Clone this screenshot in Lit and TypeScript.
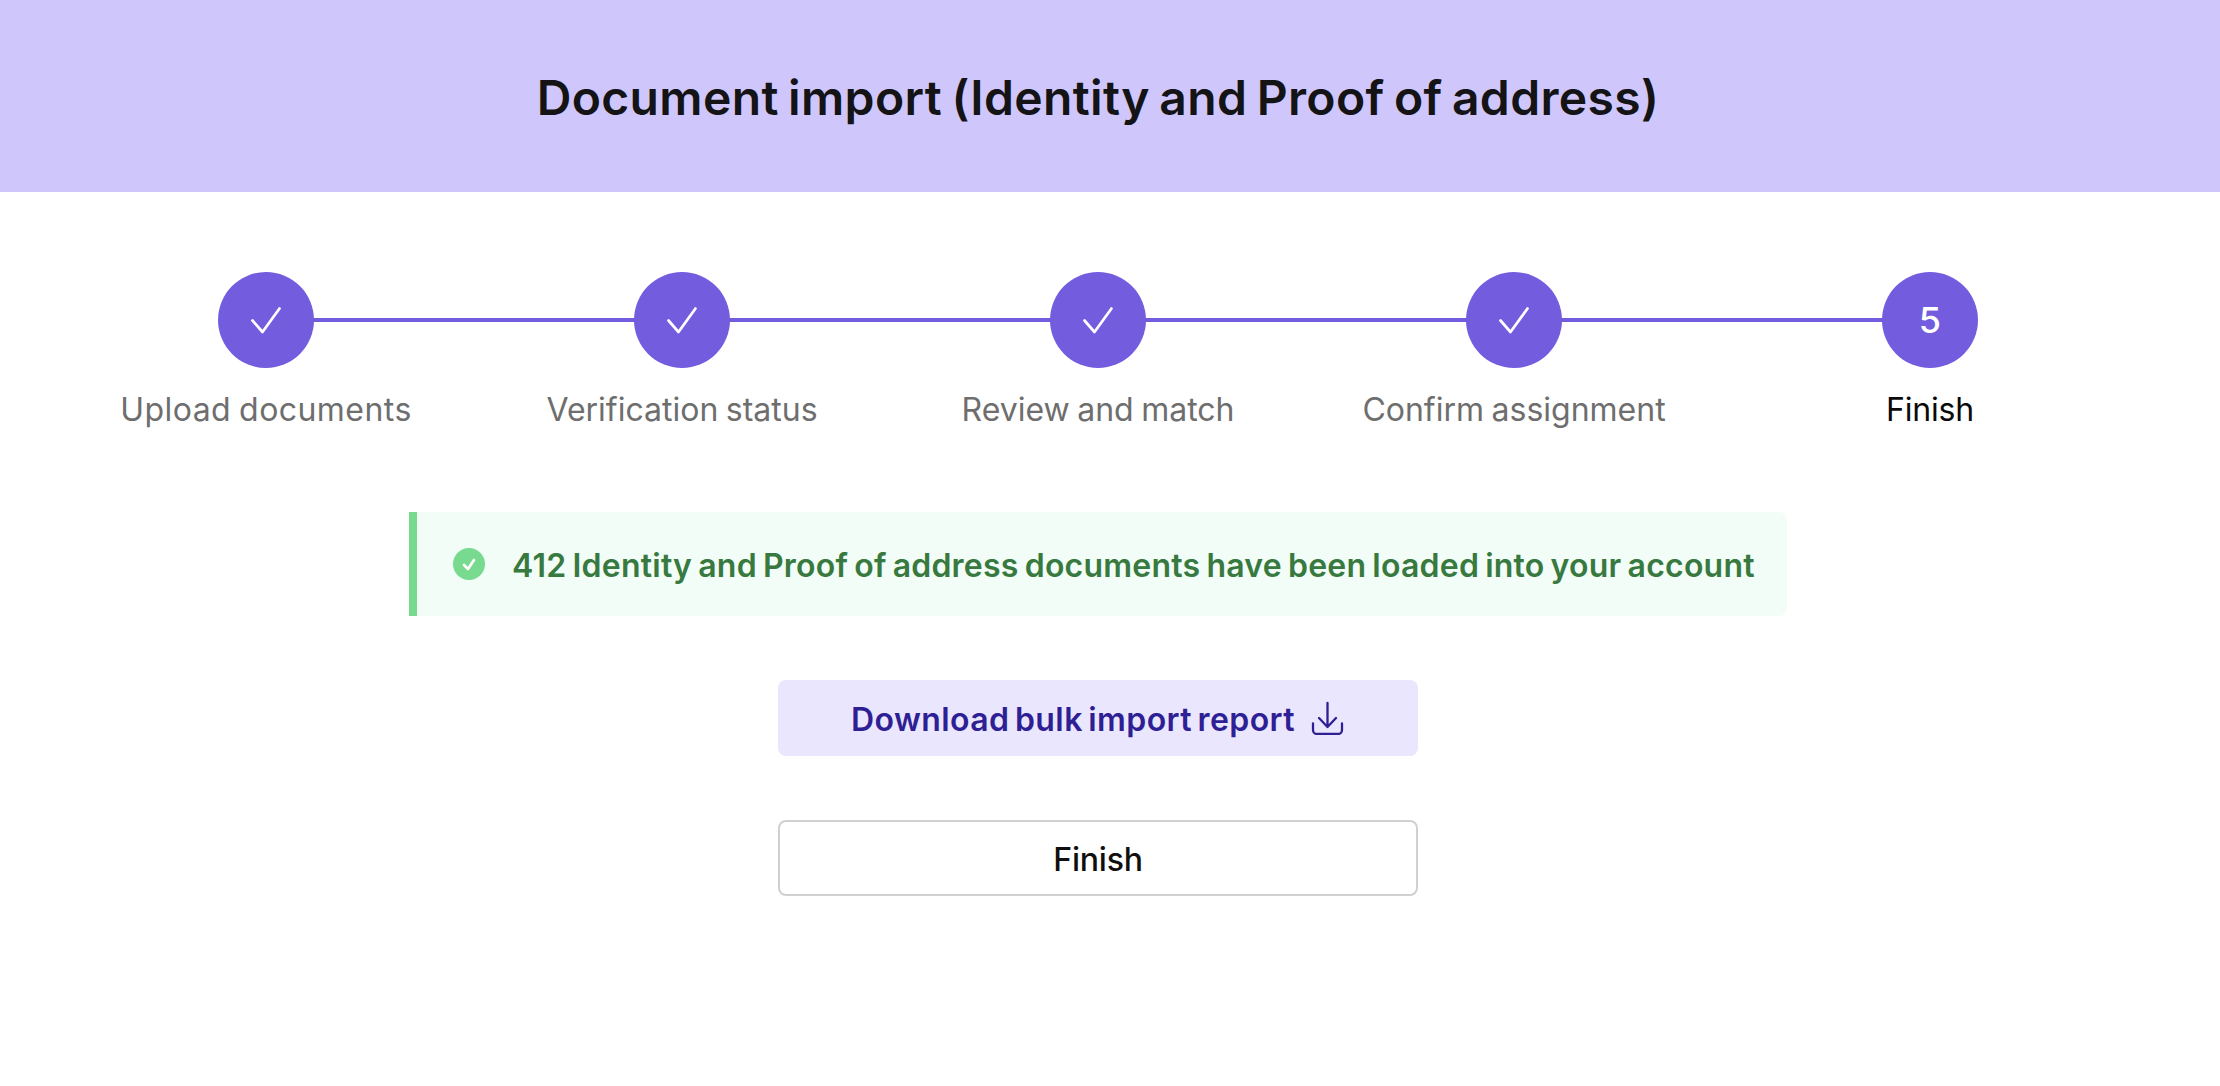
import { LitElement, html, css } from "lit";
import { customElement } from "lit/decorators.js";

const STEPS = ["Upload documents", "Verification status", "Review and match", "Confirm assignment", "Finish"];

@customElement("app-root")
export class AppRoot extends LitElement {
  static styles = css`
    :host { display: block; font-family: "Inter", "Noto Sans", sans-serif; background: #fff; min-height: 1086px; }
    .hdr { height: 192px; box-sizing: border-box; padding: 3px 24px 0 0; background: #cfc7fb; display: flex; align-items: center; justify-content: center; }
    h1 { margin: 0; font-size: 48px; font-weight: 600; color: #141316; letter-spacing: 0.35px; word-spacing: -3px; white-space: nowrap; }
    .main { padding-right: 24px; display: flex; flex-direction: column; align-items: center; }
    .steps { display: grid; grid-template-columns: repeat(5, 416px); justify-content: center; padding-top: 80px; }
    .step { display: flex; flex-direction: column; align-items: center; position: relative; }
    .step:not(:last-child)::after { content: ""; position: absolute; top: 46px; left: 50%; width: 100%; height: 4px; background: #745cde; }
    .circle { width: 96px; height: 96px; border-radius: 50%; background: #745cde; color: #fff; display: flex; align-items: center; justify-content: center; position: relative; z-index: 1; font-size: 36px; font-weight: 500; }
    .lbl { margin-top: 20px; font-size: 32px; line-height: 44px; color: #6e6e6e; white-space: nowrap; word-spacing: -1.5px; }
    .step:first-child .lbl { letter-spacing: 0.45px; }
    .step.cur .lbl { color: #0a0a0a; letter-spacing: -0.2px; }
    .alert { width: 1378px; height: 104px; box-sizing: border-box; margin-top: 80px; background: #f1fdf6; border-left: 8px solid #78da8e; border-radius: 0 8px 8px 0; display: flex; align-items: center; padding-left: 36px; gap: 27px; }
    .alert span { padding-top: 2px; font-size: 32px; font-weight: 600; color: #37793f; white-space: nowrap; letter-spacing: 0.225px; word-spacing: -2.2px; }
    .btn { width: 640px; height: 76px; box-sizing: border-box; border-radius: 8px; display: flex; align-items: center; justify-content: center; font-size: 32px; font-weight: 600; }
    .btn span { padding-top: 2px; }
    .dl { margin-top: 64px; background: #eae6fd; color: #2f1f94; gap: 16px; }
    .dl span { letter-spacing: 0.42px; word-spacing: -3px; }
    .fin { margin-top: 64px; border: 2px solid #d0d0d0; background: #fff; color: #0f0f0f; font-weight: 500; }
    .fin span { letter-spacing: -0.2px; }
    .ck { fill: none; stroke: #fff; stroke-width: 2.7; stroke-linecap: round; stroke-linejoin: round; }
    .dlic { fill: none; stroke: #2f1f94; stroke-width: 2.3; stroke-linecap: round; stroke-linejoin: round; }
  `;
  render() {
    return html`
      <div class="hdr"><h1>Document import (Identity and Proof of address)</h1></div>
      <div class="main">
        <div class="steps">
          ${STEPS.map((s, i) => html`
            <div class="step ${i === 4 ? "cur" : ""}">
              <div class="circle">
                ${i < 4 ? html`<svg width="32" height="28" viewBox="0 0 32 28"><path class="ck" d="M2.5 14.5 L12.5 26 L29.5 2.5"/></svg>` : "5"}
              </div>
              <div class="lbl">${s}</div>
            </div>`)}
        </div>
        <div class="alert">
          <svg width="32" height="32" viewBox="0 0 32 32"><circle cx="16" cy="16" r="16" fill="#78da8e"/><path class="ck" d="M11 17 L15 21 L21 12"/></svg>
          <span>412 Identity and Proof of address documents have been loaded into your account</span>
        </div>
        <div class="btn dl"><span>Download bulk import report</span>
          <svg width="34" height="34" viewBox="0 0 34 34"><path class="dlic" d="M16.5 2 V26 M8 17 L16.5 26 L25 17 M2 22.5 V29 a4 4 0 0 0 4 4 H27 a4 4 0 0 0 4 -4 V22.5"/></svg>
        </div>
        <div class="btn fin"><span>Finish</span></div>
      </div>
    `;
  }
}
